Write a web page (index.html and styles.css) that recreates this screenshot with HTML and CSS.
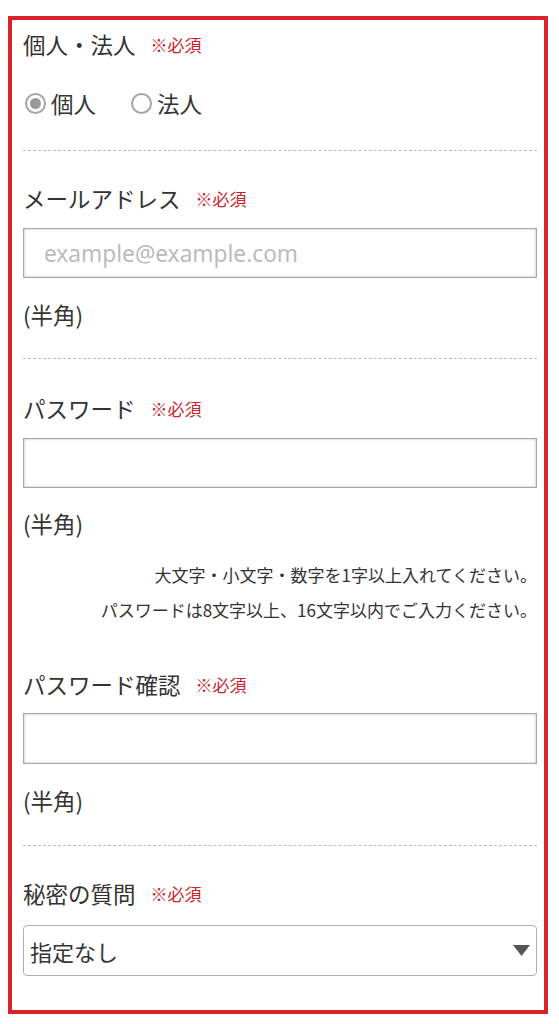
FILE: index.html
```html
<!DOCTYPE html>
<html lang="ja">
<head>
<meta charset="utf-8">
<title>会員登録</title>
<link rel="stylesheet" href="styles.css">
</head>
<body>
<form class="form">
  <div class="field f1 sep">
    <div class="label">個人・法人<span class="req">※必須</span></div>
    <div class="radios">
      <label class="radio"><span class="dot checked"></span><span>個人</span></label>
      <label class="radio"><span class="dot"></span><span>法人</span></label>
    </div>
  </div>
  <div class="field f2 sep">
    <div class="label">メールアドレス<span class="req">※必須</span></div>
    <input class="text" type="text" placeholder="example@example.com">
    <div class="hint">(半角)</div>
  </div>
  <div class="field f3">
    <div class="label">パスワード<span class="req">※必須</span></div>
    <input class="text" type="password">
    <div class="hint">(半角)</div>
    <div class="notes">
      <p>大文字・小文字・数字を1字以上入れてください。</p>
      <p>パスワードは8文字以上、16文字以内でご入力ください。</p>
    </div>
  </div>
  <div class="field f4 sep">
    <div class="label">パスワード確認<span class="req">※必須</span></div>
    <input class="text" type="password">
    <div class="hint">(半角)</div>
  </div>
  <div class="field f5">
    <div class="label">秘密の質問<span class="req">※必須</span></div>
    <div class="select-wrap">
      <select class="select"><option>指定なし</option></select>
      <svg class="arrow" width="17" height="11" viewBox="0 0 17 11"><path d="M0 0H17L8.5 11Z" fill="#555"/></svg>
    </div>
  </div>
</form>
</body>
</html>
```

FILE: styles.css
```css
* { box-sizing: border-box; }
body {
  margin: 0;
  background: #fff;
  font-family: "Noto Sans CJK JP", "Noto Sans", sans-serif;
  color: #333;
}
.form {
  margin: 16px 11px 0 8px;
  border: 4px solid #d9232b;
  padding: 9px 7px 34px 11px;
}
.label {
  font-size: 22.5px;
  line-height: 30px;
  height: 30px;
  display: flex;
  align-items: center;
  white-space: nowrap;
}
.req {
  font-size: 17px;
  color: #c9252c;
  margin-left: 15px;
  position: relative;
  top: 1px;
}
.sep { border-bottom: 1px dashed #bdbdbd; }
.f1 { padding-bottom: 32px; }
.f2 { padding-top: 32px; padding-bottom: 29px; }
.f3 { padding-top: 34px; }
.f4 { padding-top: 42px; padding-bottom: 30px; }
.f5 { padding-top: 32px; }

.radios {
  margin-top: 29px;
  height: 30px;
  display: flex;
  align-items: center;
  gap: 35px;
  font-size: 22.5px;
  padding-left: 2px;
}
.radio { display: flex; align-items: center; gap: 5px; }
.dot {
  flex: none;
  width: 21px;
  height: 21px;
  border: 2px solid #a5a5a5;
  border-radius: 50%;
  display: flex;
  align-items: center;
  justify-content: center;
}
.dot.checked::after {
  content: "";
  width: 11px;
  height: 11px;
  border-radius: 50%;
  background: #9a9a9a;
}
.text {
  display: block;
  width: 100%;
  height: 50px;
  margin-top: 15px;
  border: 1px solid #a8a8a8;
  box-shadow: inset 0 0 3px rgba(0,0,0,0.28);
  padding: 0 0 0 20px;
  font-family: "Noto Sans", "Noto Sans CJK JP", sans-serif;
  font-size: 22.7px;
  color: #333;
  background: #fff;
  outline: none;
}
.text::placeholder { color: #bbb; }
.f4 .text { margin-top: 14px; height: 51px; }
.hint {
  margin-top: 21px;
  font-size: 22.5px;
  line-height: 30px;
  height: 30px;
}
.f3 .hint { margin-top: 20px; }
.notes {
  margin-top: 19px;
  padding-right: 0;
  text-align: right;
  font-size: 17px;
  line-height: 35px;
}
.notes p { margin: 0; }
.select-wrap { position: relative; margin-top: 17px; }
.select {
  display: block;
  width: 100%;
  height: 51px;
  -webkit-appearance: none;
  appearance: none;
  border: 1px solid #b0b0b0;
  border-radius: 4px;
  background: #fff;
  padding: 0 0 0 6px;
  font-family: "Noto Sans CJK JP", sans-serif;
  font-size: 22px;
  color: #333;
}
.arrow { position: absolute; right: 7px; top: 20px; pointer-events: none; }
```
